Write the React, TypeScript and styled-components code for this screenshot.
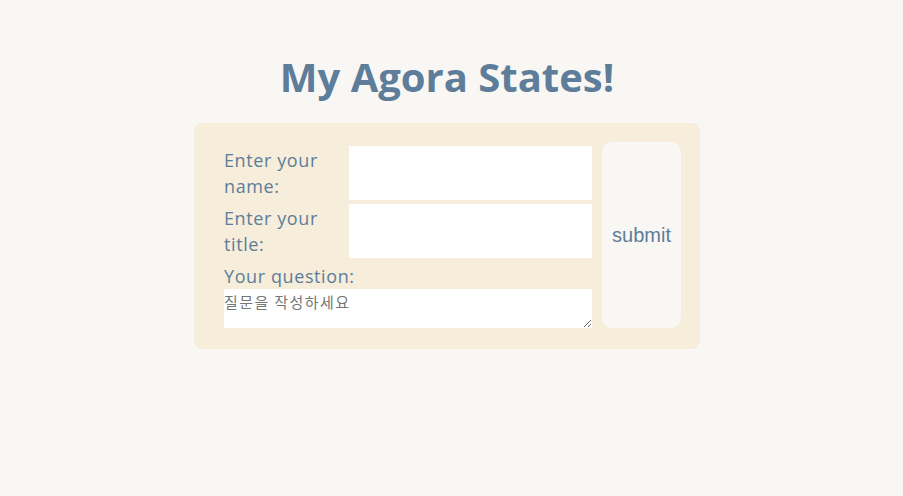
import React from "react";
import styled, { createGlobalStyle } from "styled-components";

const GlobalStyle = createGlobalStyle`
  html, body {
    margin: 0;
    padding: 0;
    background: #f9f7f3;
  }
  body {
    font-family: "Open Sans", "Noto Sans CJK KR", sans-serif;
  }
`;

const Page = styled.main`
  display: flex;
  flex-direction: column;
  align-items: center;
  padding: 52px 9px 0 0;
`;

const Title = styled.h1`
  margin: 0 0 21px;
  font-family: "Open Sans", "Noto Sans CJK KR", sans-serif;
  font-weight: 700;
  font-size: 40px;
  line-height: 50px;
  color: #5d7d9a;
`;

const FormCard = styled.form`
  display: flex;
  gap: 10px;
  width: 506px;
  box-sizing: border-box;
  padding: 19px 19px 21px 30px;
  background: #f6eddb;
  border-radius: 8px;
`;

const Fields = styled.div`
  display: flex;
  flex-direction: column;
  width: 368px;
  margin-top: 4px;
`;

const Row = styled.div`
  display: flex;
  height: 54px;
  margin-bottom: 4px;
`;

const Label = styled.label<{ $width?: number }>`
  width: ${(p) => (p.$width ? `${p.$width}px` : "auto")};
  flex-shrink: 0;
  padding-top: 1px;
  font-size: 18px;
  line-height: 26px;
  letter-spacing: 0.6px;
  color: #5d7d9a;
`;

const TextInput = styled.input`
  flex: 1;
  border: none;
  outline: none;
  background: #ffffff;
  padding: 0 8px;
  font-size: 16px;
`;

const QuestionLabel = styled(Label)`
  height: 27px;
  padding-top: 0;
  line-height: 28px;
`;

const Question = styled.textarea`
  height: 39px;
  box-sizing: border-box;
  border: none;
  outline: none;
  background: #ffffff;
  padding: 4px 0 0;
  margin: 0;
  font-family: "Noto Sans CJK KR", sans-serif;
  font-size: 15px;
  line-height: 18px;
  letter-spacing: 1.4px;
  color: #333;
  resize: both;
  &::placeholder {
    color: #767676;
  }
`;

const SubmitButton = styled.button`
  width: 79px;
  border: none;
  border-radius: 10px;
  background: #f9f7f3;
  color: #5d7d9a;
  font-family: "Liberation Sans", Arial, sans-serif;
  font-size: 20px;
  cursor: pointer;
`;

export default function App() {
  return (
    <>
      <GlobalStyle />
      <Page>
        <Title>My Agora States!</Title>
        <FormCard onSubmit={(e) => e.preventDefault()}>
          <Fields>
            <Row>
              <Label $width={125} htmlFor="name">
                Enter your name:
              </Label>
              <TextInput id="name" type="text" />
            </Row>
            <Row>
              <Label $width={125} htmlFor="title">
                Enter your title:
              </Label>
              <TextInput id="title" type="text" />
            </Row>
            <QuestionLabel htmlFor="story">Your question:</QuestionLabel>
            <Question id="story" placeholder="질문을 작성하세요" />
          </Fields>
          <SubmitButton type="submit">submit</SubmitButton>
        </FormCard>
      </Page>
    </>
  );
}
